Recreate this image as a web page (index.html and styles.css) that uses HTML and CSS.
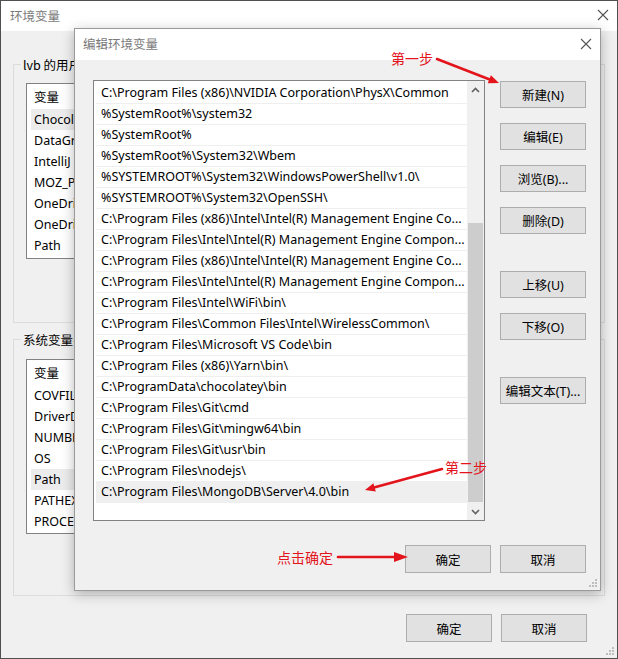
FILE: index.html
```html
<!DOCTYPE html>
<html lang="zh">
<head>
<meta charset="utf-8">
<title>环境变量</title>
<link rel="stylesheet" href="styles.css">
</head>
<body>
<div class="win">
  <div class="titlebar">
    <span class="title">环境变量</span>
    <svg class="close" width="12" height="12" viewBox="0 0 12 12"><path d="M1 1 L11 11 M11 1 L1 11" stroke="#555" stroke-width="1.1" fill="none"/></svg>
  </div>
  <div class="winbody">
    <fieldset class="group g-user">
      <legend>lvb 的用户变量(U)</legend>
      <div class="varlist vl-user">
        <div class="vhead">变量</div>
        <div class="vrow sel">ChocolateyLastPathUpdate</div>
        <div class="vrow">DataGrip</div>
        <div class="vrow">IntelliJ IDEA</div>
        <div class="vrow">MOZ_PLUGIN_PATH</div>
        <div class="vrow">OneDrive</div>
        <div class="vrow">OneDriveConsumer</div>
        <div class="vrow">Path</div>
      </div>
    </fieldset>
    <fieldset class="group g-sys">
      <legend>系统变量(S)</legend>
      <div class="varlist vl-sys">
        <div class="vhead">变量</div>
        <div class="vrow">COVFILE</div>
        <div class="vrow">DriverData</div>
        <div class="vrow">NUMBER_OF_PROCESSORS</div>
        <div class="vrow">OS</div>
        <div class="vrow sel">Path</div>
        <div class="vrow">PATHEXT</div>
        <div class="vrow">PROCESSOR_ARCHITECTURE</div>
      </div>
    </fieldset>
    <div class="footer">
      <button class="btn">确定</button>
      <button class="btn">取消</button>
    </div>
  </div>
  <svg class="grip" width="10" height="10" viewBox="0 0 10 10"><g fill="#bdbdbd"><rect x="7" y="1" width="2" height="2"/><rect x="4" y="4" width="2" height="2"/><rect x="7" y="4" width="2" height="2"/><rect x="1" y="7" width="2" height="2"/><rect x="4" y="7" width="2" height="2"/><rect x="7" y="7" width="2" height="2"/></g></svg>
</div>

<div class="dialog">
  <div class="titlebar dlg-title">
    <span class="title">编辑环境变量</span>
    <svg class="close" width="12" height="12" viewBox="0 0 12 12"><path d="M1 1 L11 11 M11 1 L1 11" stroke="#555" stroke-width="1.1" fill="none"/></svg>
  </div>
  <div class="dlgbody">
    <div class="dlgmain">
      <div class="pathlist">
        <div class="rows">
          <div class="prow">C:\Program Files (x86)\NVIDIA Corporation\PhysX\Common</div>
          <div class="prow">%SystemRoot%\system32</div>
          <div class="prow">%SystemRoot%</div>
          <div class="prow">%SystemRoot%\System32\Wbem</div>
          <div class="prow">%SYSTEMROOT%\System32\WindowsPowerShell\v1.0\</div>
          <div class="prow">%SYSTEMROOT%\System32\OpenSSH\</div>
          <div class="prow">C:\Program Files (x86)\Intel\Intel(R) Management Engine Co...</div>
          <div class="prow">C:\Program Files\Intel\Intel(R) Management Engine Compon...</div>
          <div class="prow">C:\Program Files (x86)\Intel\Intel(R) Management Engine Co...</div>
          <div class="prow">C:\Program Files\Intel\Intel(R) Management Engine Compon...</div>
          <div class="prow">C:\Program Files\Intel\WiFi\bin\</div>
          <div class="prow">C:\Program Files\Common Files\Intel\WirelessCommon\</div>
          <div class="prow">C:\Program Files\Microsoft VS Code\bin</div>
          <div class="prow">C:\Program Files (x86)\Yarn\bin\</div>
          <div class="prow">C:\ProgramData\chocolatey\bin</div>
          <div class="prow">C:\Program Files\Git\cmd</div>
          <div class="prow">C:\Program Files\Git\mingw64\bin</div>
          <div class="prow">C:\Program Files\Git\usr\bin</div>
          <div class="prow">C:\Program Files\nodejs\</div>
          <div class="prow sel">C:\Program Files\MongoDB\Server\4.0\bin</div>
        </div>
        <div class="scrollbar">
          <div class="sb-arrow">
            <svg width="9" height="6" viewBox="0 0 9 6"><path d="M1 5 L4.5 1.5 L8 5" stroke="#606060" stroke-width="1.6" fill="none"/></svg>
          </div>
          <div class="sb-track"><div class="sb-thumb"></div></div>
          <div class="sb-arrow">
            <svg width="9" height="6" viewBox="0 0 9 6"><path d="M1 1 L4.5 4.5 L8 1" stroke="#606060" stroke-width="1.6" fill="none"/></svg>
          </div>
        </div>
      </div>
      <div class="sidebtns">
        <button class="btn">新建(N)</button>
        <button class="btn">编辑(E)</button>
        <button class="btn">浏览(B)...</button>
        <button class="btn">删除(D)</button>
        <button class="btn gap-lg">上移(U)</button>
        <button class="btn">下移(O)</button>
        <button class="btn gap-xl">编辑文本(T)...</button>
      </div>
    </div>
    <div class="footer dlg-footer">
      <button class="btn">确定</button>
      <button class="btn">取消</button>
    </div>
  </div>
  <svg class="grip" width="10" height="10" viewBox="0 0 10 10"><g fill="#bdbdbd"><rect x="7" y="1" width="2" height="2"/><rect x="4" y="4" width="2" height="2"/><rect x="7" y="4" width="2" height="2"/><rect x="1" y="7" width="2" height="2"/><rect x="4" y="7" width="2" height="2"/><rect x="7" y="7" width="2" height="2"/></g></svg>
</div>

<div class="notes">
  <svg class="arrows" width="618" height="659" viewBox="0 0 618 659">
    <g stroke="#e3141b" stroke-width="2.6" fill="none" stroke-linecap="round">
      <line x1="437" y1="59" x2="491" y2="80"/>
      <line x1="442" y1="469" x2="374" y2="487.5"/>
      <line x1="338" y1="557" x2="396" y2="557"/>
    </g>
    <g fill="#e3141b">
      <polygon points="499,83 487.8,83.3 490.9,75.2"/>
      <polygon points="365,490 373.4,483.2 375.8,491.6"/>
      <polygon points="408,557 394,552 394,562"/>
    </g>
  </svg>
  <span class="note n1">第一步</span>
  <span class="note n2">第二步</span>
  <span class="note n3">点击确定</span>
</div>
</body>
</html>
```

FILE: styles.css
```css
* { box-sizing: border-box; }

html, body {
  margin: 0;
  padding: 0;
  width: 618px;
  height: 659px;
  overflow: hidden;
  background: #f0f0f0;
}

body {
  position: relative;
  font-family: "Noto Sans", "Noto Sans CJK SC", sans-serif;
  font-size: 12px;
  color: #000;
}

.win {
  width: 618px;
  height: 659px;
  border: 1px solid #505050;
  background: #f0f0f0;
  display: flex;
  flex-direction: column;
  position: relative;
}

.titlebar {
  height: 30px;
  flex: none;
  background: #fff;
  display: flex;
  align-items: center;
  justify-content: space-between;
  padding: 0 8px 2px 9px;
}

.title {
  color: #7a7a7a;
  font-size: 12.5px;
  font-family: "Noto Sans CJK SC", sans-serif;
}

.close { display: block; }

.winbody {
  flex: 1;
  display: flex;
  flex-direction: column;
  padding: 25px 12px 0 12px;
}

.group {
  margin: 0;
  padding: 10px 12px 0 0;
  border: 1px solid #dcdcdc;
  min-width: 0;
}

.group legend {
  padding: 0 2px;
  margin-left: 7px;
  max-width: 58px;
  overflow: hidden;
  white-space: nowrap;
  font-family: "Noto Sans CJK SC", sans-serif;
  font-size: 12.5px;
  line-height: 17px;
  color: #000;
}

.g-user { height: 267px; }
.g-sys { height: 265px; margin-top: 8px; padding-top: 11px; }

.varlist {
  width: 64px;
  margin-left: 12px;
  background: #fff;
  border: 1px solid #828282;
  overflow: hidden;
  white-space: nowrap;
  font-size: 12.5px;
}

.vl-user { height: 176px; }
.vl-sys { height: 175px; }

.vhead {
  height: 25px;
  line-height: 25px;
  padding-left: 7px;
  font-family: "Noto Sans CJK SC", sans-serif;
}

.vrow {
  height: 21px;
  line-height: 21px;
  margin-left: 4px;
  padding-left: 3px;
  overflow: hidden;
}

.vrow.sel { background: #ececec; }

.footer {
  display: flex;
  justify-content: flex-end;
  gap: 9px;
  margin-top: 18px;
  padding-right: 18px;
}

.btn {
  width: 86px;
  height: 28px;
  margin: 0;
  padding: 0;
  background: #e1e1e1;
  border: 1px solid #adadad;
  font-family: "Noto Sans", "Noto Sans CJK SC", sans-serif;
  font-size: 12.5px;
  color: #000;
  flex: none;
}

.grip {
  position: absolute;
  right: 2px;
  bottom: 2px;
}

/* edit dialog window */
.dialog {
  position: absolute;
  left: 74px;
  top: 28px;
  width: 527px;
  height: 563px;
  border: 1px solid #9a9a9a;
  background: #f0f0f0;
  box-shadow: 0 3px 12px rgba(0, 0, 0, 0.28);
  display: flex;
  flex-direction: column;
}

.dlg-title {
  height: 31px;
  padding: 0 8px 2px 8px;
}

.dlgbody {
  flex: 1;
  display: flex;
  flex-direction: column;
  padding: 20px 14px 0 18px;
}

.dlgmain {
  display: flex;
  gap: 15px;
}

.pathlist {
  width: 393px;
  height: 441px;
  background: #fff;
  border: 1px solid #828282;
  display: flex;
}

.rows {
  flex: 1;
  padding-top: 2px;
  overflow: hidden;
  white-space: nowrap;
}

.prow {
  height: 21px;
  line-height: 20px;
  margin-left: 2px;
  padding-left: 5px;
  border-bottom: 1px solid #efefef;
  font-size: 12.5px;
}

.prow.sel { background: #efefef; }

.scrollbar {
  width: 17px;
  flex: none;
  background: #f0f0f0;
  display: flex;
  flex-direction: column;
}

.sb-arrow {
  height: 17px;
  display: flex;
  align-items: center;
  justify-content: center;
}

.sb-track {
  flex: 1;
  display: flex;
  flex-direction: column;
  padding: 125px 1px 1px 1px;
}

.sb-thumb {
  flex: 1;
  background: #cdcdcd;
}

.sidebtns {
  display: flex;
  flex-direction: column;
  padding-top: 1px;
  gap: 15px;
}

.sidebtns .btn { height: 27px; }
.sidebtns .gap-lg { margin-top: 22px; }
.sidebtns .gap-xl { margin-top: 22px; }

.dlg-footer {
  margin-top: 24px;
  padding-right: 0;
}

/* annotations */
.notes {
  position: absolute;
  left: 0;
  top: 0;
  width: 618px;
  height: 659px;
  pointer-events: none;
}

.arrows {
  position: absolute;
  left: 0;
  top: 0;
}

.note {
  position: absolute;
  color: #e3141b;
  font-family: "Noto Sans CJK SC", sans-serif;
  font-size: 14px;
  line-height: 16px;
  white-space: nowrap;
}

.n1 { left: 391px; top: 50px; }
.n2 { left: 445px; top: 459px; }
.n3 { left: 277px; top: 549px; }
```
